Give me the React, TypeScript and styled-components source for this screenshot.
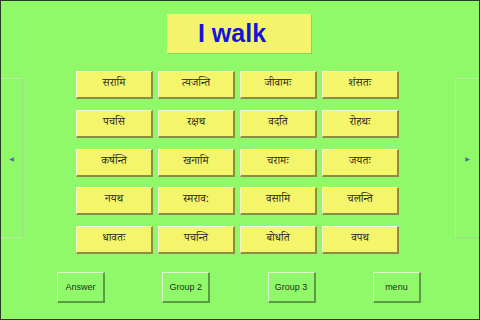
import { createGlobalStyle } from "styled-components";
import styled from "styled-components";

const GlobalStyle = createGlobalStyle`
  html, body {
    margin: 0;
    padding: 0;
    background: #90f96a;
  }
`;

const words = [
  ["सरामि", "त्यजन्ति", "जीवामः", "शंसतः"],
  ["पचसि", "रक्षथ", "वदति", "रोहथः"],
  ["कर्षन्ति", "खनामि", "चरामः", "जयतः"],
  ["नयथ", "स्मराव:", "वसामि", "चलन्ति"],
  ["धावतः", "पचन्ति", "बोधति", "वपथ"],
];

const Page = styled.div`
  width: 480px;
  height: 320px;
  box-sizing: border-box;
  border: 1px solid #2a3a24;
  background: #90f96a;
  display: flex;
  flex-direction: column;
  overflow: hidden;
`;

const TitleRow = styled.div`
  display: flex;
  justify-content: flex-start;
  padding: 13px 0 0 166px;
`;

const Title = styled.div`
  width: 144px;
  height: 39px;
  background: #f4f46c;
  box-shadow: 1px 1px 0 #7fd860;
  display: flex;
  align-items: center;
  justify-content: center;
  padding-right: 14px;
  box-sizing: border-box;
  font-family: "Liberation Sans", Arial, sans-serif;
  font-weight: bold;
  font-size: 25px;
  color: #1414d8;
`;

const Middle = styled.div`
  display: flex;
  align-items: flex-start;
  margin-top: 18px;
  height: 188px;
`;

const SidePanel = styled.div<{ $side: "left" | "right" }>`
  width: ${(p) => (p.$side === "left" ? "22px" : "24px")};
  height: 160px;
  margin-top: 7px;
  box-sizing: border-box;
  border: 1px solid #b6ec9e;
  ${(p) => (p.$side === "left" ? "border-left: none; border-right-color: #9fdc88;" : "border-right: none; border-bottom-color: #9fdc88;")}
  display: flex;
  align-items: center;
  justify-content: center;
  font-family: "DejaVu Sans", sans-serif;
  font-size: 6px;
  color: #6060b8;
`;

const Grid = styled.div`
  display: grid;
  grid-template-columns: repeat(4, 77px);
  grid-auto-rows: 28px;
  column-gap: 5px;
  row-gap: 10.75px;
  margin-left: 53px;
  margin-right: 56px;
`;

const WordButton = styled.div`
  background: #f5f56c;
  box-sizing: border-box;
  border-top: 1px solid #fbfbd0;
  border-left: 1px solid #fbfbd0;
  border-right: 2px solid #8c8c44;
  border-bottom: 2px solid #8c8c44;
  display: flex;
  align-items: center;
  justify-content: center;
  font-family: "Noto Serif Devanagari", "Noto Sans Devanagari", "Lohit Devanagari", "Noto Sans", sans-serif;
  font-size: 11px;
  color: #2a2a1a;
`;

const Bottom = styled.div`
  display: flex;
  gap: 57.3px;
  padding-left: 56px;
  margin-top: 13px;
`;

const NavButton = styled.div`
  width: 48px;
  height: 31px;
  box-sizing: border-box;
  border-top: 1px solid #e2ffd4;
  border-left: 1px solid #e2ffd4;
  border-right: 2px solid #5c9a44;
  border-bottom: 2px solid #5c9a44;
  display: flex;
  align-items: center;
  justify-content: center;
  font-family: "Liberation Sans", Arial, sans-serif;
  font-size: 9px;
  color: #1c3214;
`;

export default function App() {
  return (
    <Page>
      <GlobalStyle />
      <TitleRow>
        <Title>I walk</Title>
      </TitleRow>
      <Middle>
        <SidePanel $side="left">◀</SidePanel>
        <Grid>
          {words.flat().map((w, i) => (
            <WordButton key={i}>{w}</WordButton>
          ))}
        </Grid>
        <SidePanel $side="right">▶</SidePanel>
      </Middle>
      <Bottom>
        <NavButton>Answer</NavButton>
        <NavButton>Group 2</NavButton>
        <NavButton>Group 3</NavButton>
        <NavButton>menu</NavButton>
      </Bottom>
    </Page>
  );
}
